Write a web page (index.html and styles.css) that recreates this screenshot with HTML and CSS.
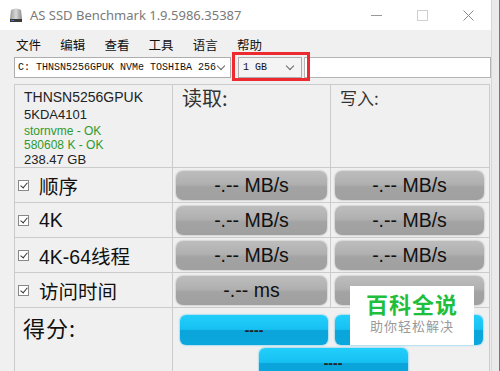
FILE: index.html
```html
<!DOCTYPE html>
<html lang="zh-CN">
<head>
    <meta charset="UTF-8">
    <title>AS SSD Benchmark</title>
    <link rel="stylesheet" href="styles.css">
</head>
<body>
    <div class="window">
        <div class="titlebar">
            <svg class="app-icon" width="14" height="16" viewBox="0 0 14 16">
                <defs>
                    <linearGradient id="g" x1="0" y1="0" x2="1" y2="0">
                        <stop offset="0" stop-color="#9a9a9a"/>
                        <stop offset="0.5" stop-color="#d8d8d8"/>
                        <stop offset="1" stop-color="#8a8a8a"/>
                    </linearGradient>
                </defs>
                <path d="M2 3 Q7 0 12 3 L13 12 L1 12 Z" fill="url(#g)"/>
                <rect x="1" y="12" width="12" height="3" fill="#3a3a3a"/>
                <rect x="2" y="13" width="3" height="1" fill="#3a6cff"/>
            </svg>
            <span class="title">AS SSD Benchmark 1.9.5986.35387</span>
            <div class="controls">
                <span class="ctl min"></span>
                <span class="ctl max"></span>
                <span class="ctl close">
                    <svg width="11" height="11" viewBox="0 0 11 11"><path d="M0.5 0.5 L10.5 10.5 M10.5 0.5 L0.5 10.5" stroke="#888" stroke-width="1"/></svg>
                </span>
            </div>
        </div>

        <div class="main">
            <div class="menu">
                <span>文件</span><span>编辑</span><span>查看</span><span>工具</span><span>语言</span><span>帮助</span>
            </div>

            <div class="toolbar">
                <div class="combo drive">C: THNSN5256GPUK NVMe TOSHIBA 256<span class="chev"></span></div>
                <div class="combo size marked">1 GB<span class="chev"></span></div>
                <div class="textbox"></div>
            </div>

            <div class="grid">
                <div class="cell info">
                    <div class="model">THNSN5256GPUK</div>
                    <div class="fw">5KDA4101</div>
                    <div class="ok">stornvme - OK</div>
                    <div class="ok">580608 K - OK</div>
                    <div class="cap">238.47 GB</div>
                </div>
                <div class="cell head">读取:</div>
                <div class="cell head write">写入:</div>

                <div class="cell label"><span class="chk"></span>顺序</div>
                <div class="cell res"><div class="btn">-.-- MB/s</div></div>
                <div class="cell res"><div class="btn">-.-- MB/s</div></div>

                <div class="cell label"><span class="chk"></span>4K</div>
                <div class="cell res"><div class="btn">-.-- MB/s</div></div>
                <div class="cell res"><div class="btn">-.-- MB/s</div></div>

                <div class="cell label"><span class="chk"></span>4K-64线程</div>
                <div class="cell res"><div class="btn">-.-- MB/s</div></div>
                <div class="cell res"><div class="btn">-.-- MB/s</div></div>

                <div class="cell label"><span class="chk"></span>访问时间</div>
                <div class="cell res"><div class="btn">-.-- ms</div></div>
                <div class="cell res"><div class="btn"></div></div>

                <div class="cell score-label">得分:</div>
                <div class="cell score">
                    <div class="blue">----</div>
                    <div class="blue"></div>
                    <div class="blue total">----</div>
                </div>
            </div>
        </div>

        <div class="badge">
            <div class="badge-title">百科全说</div>
            <div class="badge-sub">助你轻松解决</div>
        </div>
    </div>
</body>
</html>
```

FILE: styles.css
```css
body { margin: 0; background: #f0f0f0; font-family: "Liberation Sans", Arial, "Noto Sans CJK SC", sans-serif; overflow: hidden; }
.window { position: relative; width: 491px; height: 371px; background: #f0f0f0; border-right: 1px solid #d6d6d6; box-shadow: 7px 0 0 #eaeaea, 8px 0 0 #777; }

.titlebar { height: 30px; background: #fff; display: flex; align-items: center; }
.app-icon { margin: 0 7px 0 9px; }
.title { font-family: "Noto Sans", sans-serif; font-size: 13px; color: #7a7a7a; }
.controls { margin-left: auto; display: flex; align-items: center; }
.ctl { width: 46px; height: 30px; display: flex; align-items: center; justify-content: center; }
.ctl.min::before { content: ""; width: 11px; border-top: 1px solid #999; }
.ctl.max::before { content: ""; width: 9px; height: 9px; border: 1px solid #cfcfcf; }

.main { padding: 2px 0 0 14px; }
.menu { height: 24px; display: flex; align-items: center; font-family: "Noto Sans CJK SC", sans-serif; font-size: 12.5px; color: #111; margin-left: 2px; }
.menu span { width: 44.2px; }

.toolbar { margin-top: 1px; display: flex; height: 21px; }
.combo { position: relative; height: 21px; box-sizing: border-box; border: 1px solid #adadad; background: #fff; font-family: "Liberation Mono", monospace; font-size: 10px; color: #111; display: flex; align-items: center; padding-left: 3px; }
.combo.drive { width: 217px; }
.combo.size { width: 64px; margin-left: 7px; padding-left: 4px; background: #f4f4f4; }
.chev { position: absolute; right: 5px; top: 5px; width: 5px; height: 5px; border-right: 1px solid #666; border-bottom: 1px solid #666; transform: rotate(45deg); }
.combo.drive .chev { right: 6px; }
.combo.size .chev { right: 8px; }
.marked::after { content: ""; position: absolute; left: -7px; right: -9px; top: -6px; bottom: -4px; border: 3px solid #ec2a2f; }
.textbox { margin-left: 2px; width: 187px; height: 21px; box-sizing: border-box; border: 1px solid #b5b5b5; background: #fff; }

.grid { margin-top: 6px; display: grid; grid-template-columns: 157px 157px 158px; grid-template-rows: 82px 34px 34px 34px 34px 80px; gap: 1px; border: 1px solid #cbcbcb; background: #cbcbcb; width: 474px; }
.cell { background: #f0f0f0; }

.info { padding: 3px 0 0 9px; font-size: 12px; color: #222; line-height: 14px; }
.info .model { font-size: 14px; line-height: 18px; }
.info .fw { font-size: 13px; line-height: 18px; }
.info .cap { font-size: 13px; line-height: 16px; }
.ok { color: #2e9a2e; line-height: 14px; }
.head { font-family: "Noto Sans CJK SC", sans-serif; font-size: 20px; color: #333; padding: 0 0 0 9px; line-height: 26px; }
.head.write { font-size: 17px; }

.label { display: flex; align-items: center; padding-left: 3px; font-family: "Liberation Sans", "Noto Sans CJK SC", sans-serif; font-size: 19.5px; color: #111; }
.chk { width: 9px; height: 9px; border: 1px solid #888; margin-right: 10px; position: relative; background: #fff; }
.chk::after { content: ""; position: absolute; left: 3px; top: 0; width: 3px; height: 6px; border-right: 1px solid #333; border-bottom: 1px solid #333; transform: rotate(40deg); }

.res { padding: 3px 3px 2px 3px; }
.res:nth-child(3n) { padding-left: 4px; padding-right: 5px; }
.btn { height: 29px; border-radius: 7px; background: linear-gradient(#bdbdbd, #b0b0b0 45%, #a3a3a3 55%, #a0a0a0); box-shadow: 0 0 2px #9a9a9a; display: flex; align-items: center; justify-content: center; font-size: 19.5px; color: #111; }

.score-label { font-family: "Noto Sans CJK SC", sans-serif; font-size: 22px; color: #111; padding: 5px 0 0 8px; line-height: 28px; letter-spacing: 1px; }
.score { grid-column: span 2; display: grid; grid-template-columns: 148px 148px; grid-template-rows: 30px 30px; column-gap: 7px; row-gap: 3px; padding: 7px 0 0 7px; }
.blue { border-radius: 6px; background: linear-gradient(#22cffb, #17c0f2 48%, #0aa4d9 52%, #0aa8de); box-shadow: 0 0 2px #1fb8ea; display: flex; align-items: center; justify-content: center; font-size: 14px; font-weight: bold; color: #222; }
.blue.total { grid-column: 1 / span 2; justify-self: center; width: 149px; margin-left: 3px; }

.badge { position: absolute; left: 350px; top: 286px; width: 124px; height: 59px; background: #fff; text-align: center; font-family: "Noto Sans CJK SC", sans-serif; }
.badge-title { font-size: 22px; font-weight: bold; color: #1fbe3c; line-height: 28px; margin-top: 3px; letter-spacing: 1px; }
.badge-sub { font-size: 13px; color: #999; line-height: 18px; letter-spacing: 1px; }
```
